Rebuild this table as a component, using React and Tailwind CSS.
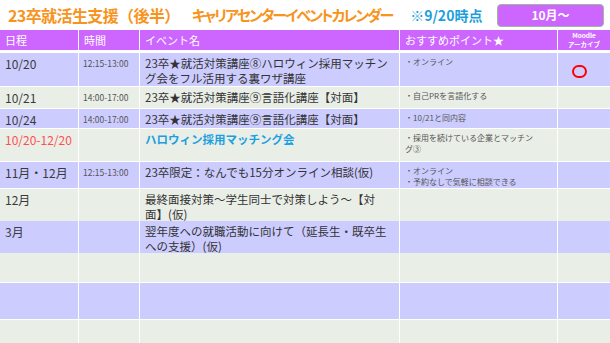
const ROWS = [
  { h: 33, bg: "bg-[#ccccff]", date: "10/20", time: "12:15-13:00", event: ["23卒★就活対策講座⑧ハロウィン採用マッチン", "グ会をフル活用する裏ワザ講座"], points: ["・オンライン"], archive: true },
  { h: 21, bg: "bg-[#e9eee7]", date: "10/21", time: "14:00-17:00", event: ["23卒★就活対策講座⑨言語化講座【対面】"], points: ["・自己PRを言語化する"] },
  { h: 19, bg: "bg-[#ccccff]", date: "10/24", time: "14:00-17:00", event: ["23卒★就活対策講座⑨言語化講座【対面】"], points: ["・10/21と同内容"] },
  { h: 32, bg: "bg-[#e9eee7]", date: "10/20-12/20", red: true, event: ["ハロウィン採用マッチング会"], blue: true, points: ["・採用を続けている企業とマッチン", "グ③"] },
  { h: 26, bg: "bg-[#ccccff]", date: "11月・12月", time: "12:15-13:00", event: ["23卒限定：なんでも15分オンライン相談(仮)"], points: ["・オンライン", "・予約なしで気軽に相談できる"] },
  { h: 31, bg: "bg-[#e9eee7]", date: "12月", event: ["最終面接対策～学生同士で対策しよう～【対", "面】(仮)"] },
  { h: 31, bg: "bg-[#ccccff]", date: "3月", event: ["翌年度への就職活動に向けて（延長生・既卒生", "への支援）(仮)"] },
  { h: 29, bg: "bg-[#e9eee7]" },
  { h: 36, bg: "bg-[#ccccff]" },
  { h: 30, bg: "bg-[#e9eee7]" },
];

const cols = "grid grid-cols-[78px_60px_259px_157px_1fr] gap-x-px";

export default function App() {
  return (
    <div className="w-[610px] h-[343px] overflow-hidden bg-white font-['Noto_Sans_CJK_JP',sans-serif]">
      <div className="h-[30px] flex items-center pl-[8px] pr-[6px] whitespace-nowrap">
        <span className="shrink-0 text-[16px] font-bold text-[#f7941d] tracking-[-0.6px]">23卒就活生支援（後半）</span>
        <span className="shrink-0 ml-[12px] text-[15px] font-bold text-[#f7941d] [font-feature-settings:'palt'] tracking-[-2px]">キャリアセンターイベントカレンダー</span>
        <span className="shrink-0 ml-[18px] text-[14px] font-bold text-[#1e9fdc] [font-feature-settings:'palt']">※9/20時点</span>
        <div className="shrink-0 ml-auto w-[107px] h-[23px] rounded-[4px] border border-[#9fb89a] bg-[#cc66ff] flex items-center justify-center text-white text-[12px] font-bold">10月～</div>
      </div>

      <div className="flex flex-col gap-y-px bg-white">
        <div className={`${cols} h-[20px] bg-white`}>
          <div className="bg-[#cc66ff] text-white text-[11px] pl-[5px] flex items-center">日程</div>
          <div className="bg-[#cc66ff] text-white text-[11px] pl-[5px] flex items-center">時間</div>
          <div className="bg-[#cc66ff] text-white text-[11px] pl-[5px] flex items-center">イベント名</div>
          <div className="bg-[#cc66ff] text-white text-[11px] pl-[5px] flex items-center">おすすめポイント★</div>
          <div className="bg-[#cc66ff] text-white text-[6.5px] leading-[9px] flex flex-col items-center justify-center font-bold whitespace-nowrap">
            <span>Moodle</span>
            <span>アーカイブ</span>
          </div>
        </div>
        <div className="h-px" />

        {ROWS.map((r, i) => (
          <div key={i} className={`${cols} bg-white`} style={{ height: r.h }}>
            <div className={`${r.bg} pl-[5px] pt-[3px] text-[12px] leading-[16px] whitespace-nowrap ${r.red ? "text-[#ff5050]" : "text-[#3a3a3a]"}`}>{r.date}</div>
            <div className={`${r.bg} pl-[4px] pt-[4px] text-[8.5px] leading-[12px] text-[#555] whitespace-nowrap`}>{r.time}</div>
            <div className={`${r.bg} pl-[5px] pt-[3px] text-[11.5px] leading-[15px] whitespace-nowrap ${r.blue ? "text-[#1aa0e0] font-bold" : "text-[#333]"}`}>
              {(r.event || []).map((l, j) => <div key={j}>{l}</div>)}
            </div>
            <div className={`${r.bg} pl-[5px] pt-[3px] text-[8px] leading-[11px] text-[#555] whitespace-nowrap`}>
              {(r.points || []).map((p, j) => <div key={j}>{p}</div>)}
            </div>
            <div className={`${r.bg} flex justify-center pt-[12px] pr-[9px]`}>
              {r.archive && <div className="w-[15px] h-[13px] rounded-full border-[2.5px] border-[#ff0000]" />}
            </div>
          </div>
        ))}
      </div>
    </div>
  );
}
